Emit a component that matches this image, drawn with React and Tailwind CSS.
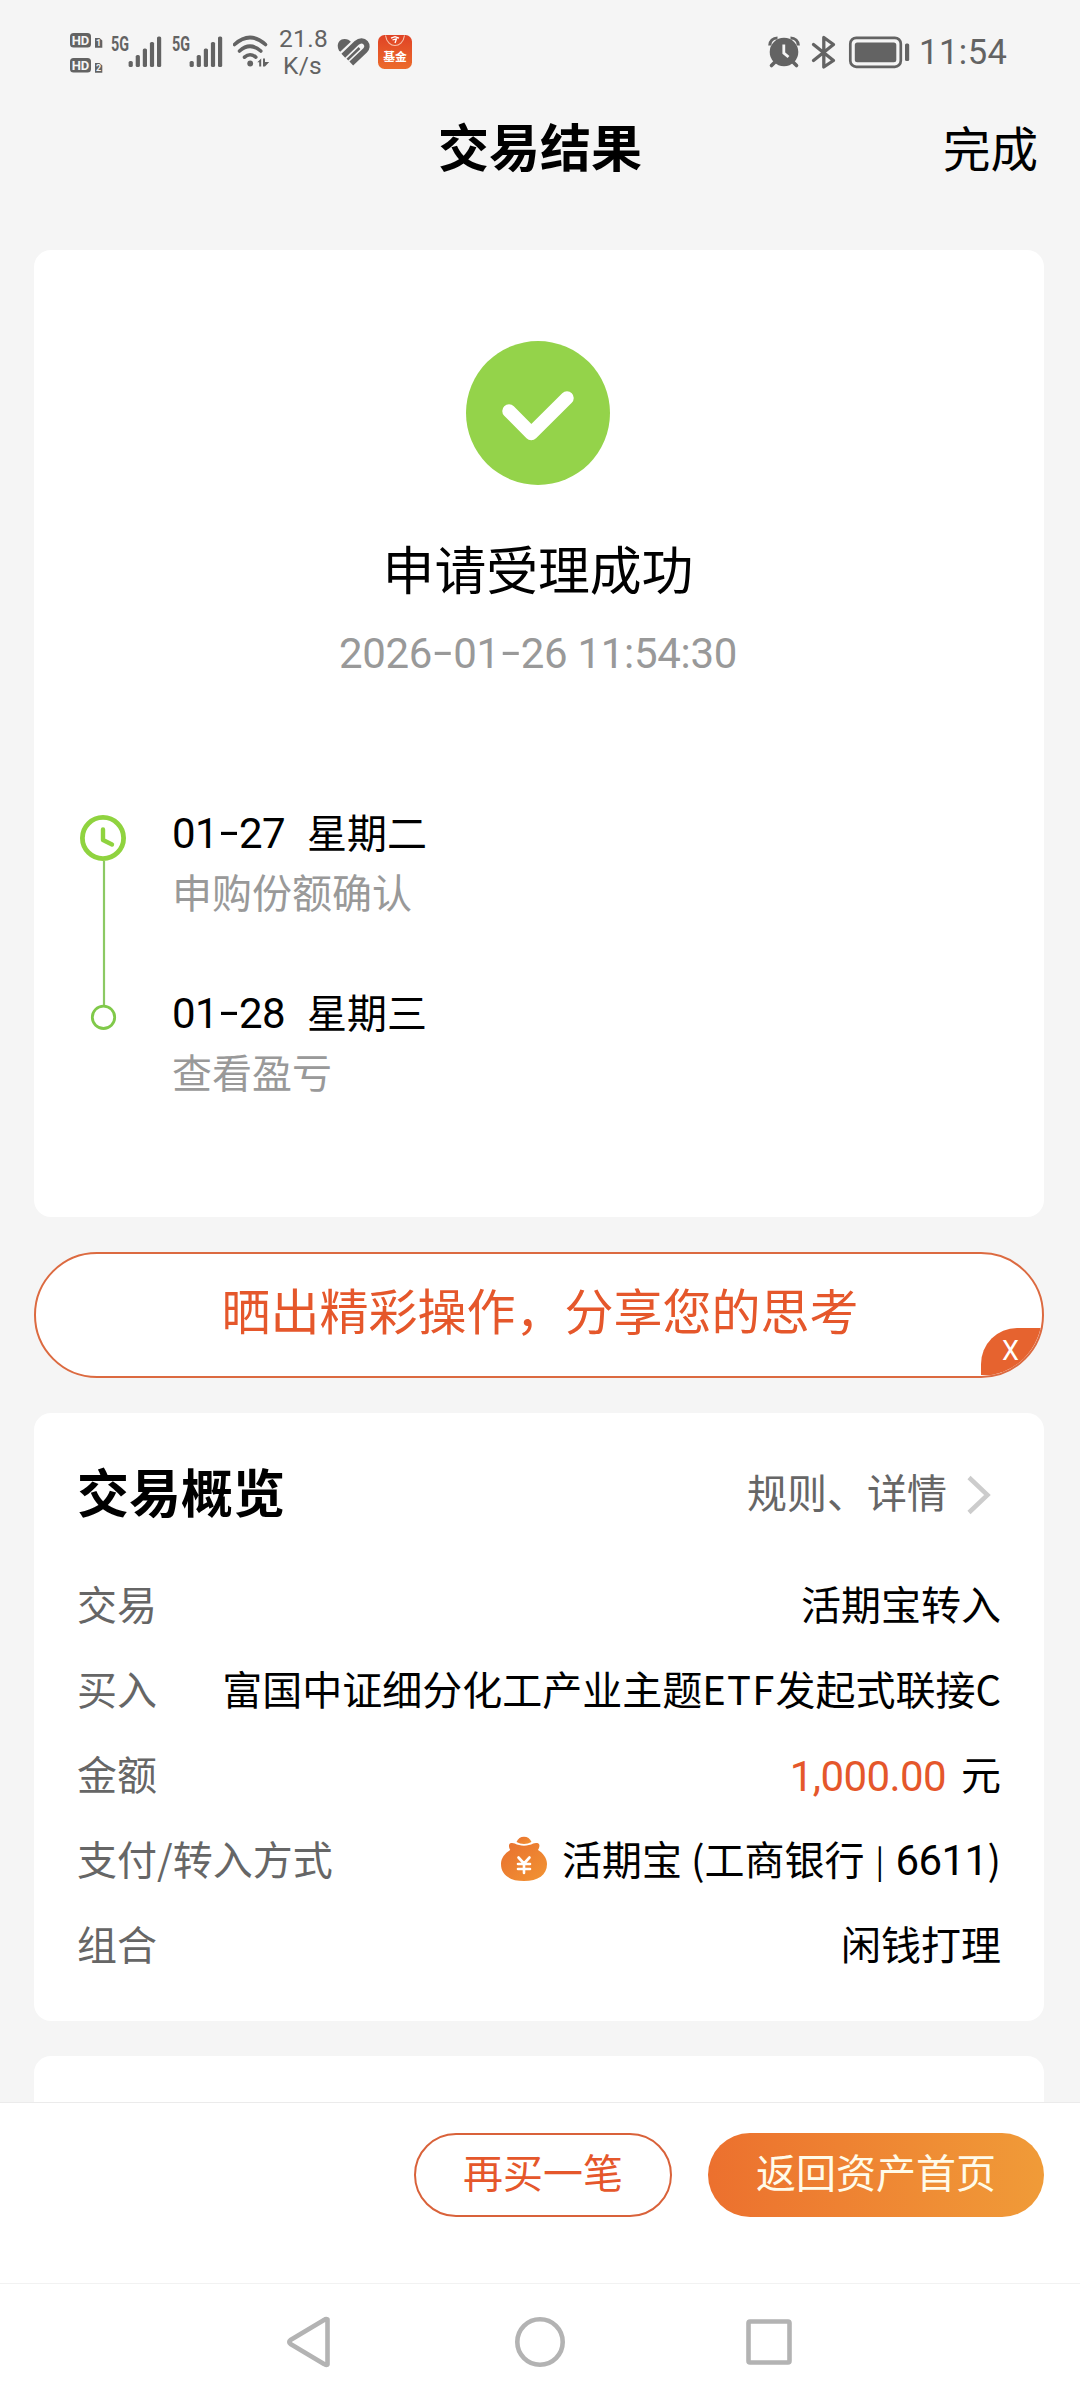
import React from "react";

/* Status bar icons share one vertical coordinate system (0-100). */
function HdBadges() {
  return (
    <svg className="block h-[100px] w-[41px] shrink-0" viewBox="70 0 41 100">
      {[33, 58].map((y, i) => (
        <g key={y}>
          <rect x="70" y={y} width="21" height="14.5" rx="3.5" fill="#636363" />
          <text x="80.5" y={y + 12} textAnchor="middle" fontFamily="Roboto, sans-serif" fontWeight="700" fontSize="13" fill="#f5f5f5">HD</text>
          <path d={`M95 ${y + 5}h4.5l2.8 2.5v7.2h-7.3z`} fill="#636363" />
          <text x="98.6" y={y + 13.2} textAnchor="middle" fontFamily="Roboto, sans-serif" fontWeight="700" fontSize="9" fill="#f5f5f5">{i + 1}</text>
        </g>
      ))}
    </svg>
  );
}

function Signal() {
  return (
    <svg className="block h-[100px] w-[61px] shrink-0" viewBox="111 0 61 100">
      <text x="111" y="50.5" textLength="18" lengthAdjust="spacingAndGlyphs" fontFamily="Roboto, sans-serif" fontWeight="700" fontSize="19.5" fill="#636363">5G</text>
      {[61, 55, 48.5, 42, 36.5].map((y, i) => (
        <rect key={y} x={128.6 + i * 7.1} y={y} width="4.2" height={67 - y} rx="1.6" fill="#636363" />
      ))}
    </svg>
  );
}

function Wifi() {
  return (
    <svg className="block h-[100px] w-[47px] shrink-0" viewBox="233 0 47 100" fill="none" stroke="#636363" strokeWidth="3.6" strokeLinecap="round">
      <path d="M234.5 44.5Q250 30.500 265.500 44.500" />
      <path d="M239.500 51Q250 41.500 260.800 51" />
      <path d="M244.500 57.200Q250 52.300 255.800 57.200" />
      <circle cx="250.200" cy="63.500" r="2.900" fill="#636363" stroke="none" />
      <path d="M257.300 62.300l3.900-3.700v7.800h-2v-4.100zM263 58.600h2v3.500h4.200l-4.200 4.500h-2z" fill="#636363" stroke="none" />
    </svg>
  );
}

function Health() {
  return (
    <svg className="block h-[100px] w-[41px] shrink-0" viewBox="337 0 41 100" fill="none" stroke="#636363" strokeLinecap="butt">
      <path d="M339 50.500C336 45.500 338.500 39 344.500 39C347.500 39 349.500 40.200 350.800 41.700L340.200 51.800Z" fill="#636363" stroke="none" />
      <path d="M343.300 55.800L356.500 43C360 39.900 363.700 40.600 365.600 42.700C367.700 45.200 367.300 48.200 365 50.500L351.300 63.500" strokeWidth="5.400" />
      <path d="M347.400 59.600L359.500 48" strokeWidth="2.600" />
    </svg>
  );
}

function FundApp() {
  return (
    <svg className="block h-[100px] w-[36px] shrink-0" viewBox="378 0 36 100">
      <defs>
        <linearGradient id="fund" x1="0" y1="0" x2="0" y2="1">
          <stop offset="0" stopColor="#e04325" />
          <stop offset="1" stopColor="#ec6b2b" />
        </linearGradient>
      </defs>
      <rect x="378" y="35" width="34" height="34" rx="6.500" fill="url(#fund)" />
      <path d="M385.500 35.500C386.500 42.500 391 45.500 395 45.500S403.500 42.500 404.500 35.500" fill="none" stroke="#f6c4ad" strokeWidth="1.100" />
      <path d="M391 38.200L395 36.600L399 38.200M392.500 40L396.500 38.800L395 43" fill="none" stroke="#fff" strokeWidth="1.300" />
      <text x="395" y="61.200" textAnchor="middle" fontFamily="'Noto Sans CJK SC', sans-serif" fontWeight="700" fontSize="11.800" fill="#fff">基金</text>
    </svg>
  );
}

function RightStatus() {
  return (
    <svg className="block h-[100px] w-[155px] shrink-0" viewBox="767 0 155 100" fill="none" stroke="#636363">
      <circle cx="784" cy="52" r="14.300" fill="#636363" stroke="none" />
      <path d="M769.800 45.500C769.800 41 773 38 777.500 38M790.500 38C795 38 798.300 41 798.300 45.500" strokeWidth="3.200" />
      <path d="M775.500 61.500L771.500 65.500M792.500 61.500L796.500 65.500" strokeWidth="3.600" strokeLinecap="round" />
      <path d="M783.800 44.500V53L788.500 57" stroke="#f5f5f5" strokeWidth="2.800" />
      <path d="M813.500 44.500L833.500 60.500L823.800 67V37.500L833.500 44.500L813.500 60.500" strokeWidth="3.300" strokeLinejoin="round" strokeLinecap="round" />
      <rect x="850.300" y="37.800" width="50.500" height="29" rx="6" strokeWidth="2.700" />
      <rect x="854.800" y="42.500" width="41.500" height="19.800" rx="2.500" fill="#636363" stroke="none" />
      <rect x="905" y="43.500" width="4.200" height="17.500" rx="1.500" fill="#636363" stroke="none" />
    </svg>
  );
}

function MoneyBag() {
  return (
    <svg className="mr-[15px] mt-[3px] block h-[46px] w-[46px] shrink-0" viewBox="0 0 46 46">
      <defs>
        <linearGradient id="bag" x1="0" y1="0" x2="1" y2="1">
          <stop offset="0" stopColor="#e8702f" />
          <stop offset="1" stopColor="#f29433" />
        </linearGradient>
      </defs>
      <path d="M15.500 6C17 2.500 19.500 .700 23 .700S29 2.500 30.500 6C26 8.500 20 8.500 15.500 6Z" fill="url(#bag)" />
      <path d="M8.200 8.500C9 6.600 12 6.700 13.800 7.600C19 10.300 27 10.300 32.200 7.600C34 6.700 37.500 6.600 38.200 8.500C39 10.500 37.500 13 37 14C42 17 46 22 46 28C46 39 37 45 23 45S0 39 0 28C0 22 4 17 9.300 14C8.500 12.500 7.500 10.500 8.200 8.500Z" fill="url(#bag)" />
      <path d="M17.500 21.500L23 27.500L28.500 21.500M17 28H29M17 33H29M23 27.500V37" fill="none" stroke="#fff" strokeWidth="2.600" strokeLinecap="round" />
    </svg>
  );
}

/* Numerals with a wide dash between the groups. */
function Digits({ text }) {
  return (
    <span className="whitespace-pre font-['Roboto',sans-serif] text-[42px] leading-[50px] tracking-[-0.6px]">
      {text.split("-").map((part, i) => (
        <React.Fragment key={i}>
          {i > 0 && <span className="inline-block w-[21px] -translate-y-[2px] scale-x-[1.6] text-center">-</span>}
          {part}
        </React.Fragment>
      ))}
    </span>
  );
}

function Step({ date, day, note }) {
  return (
    <div className="text-[40px] leading-[60px]">
      <div className="flex h-[60px]">
        <span className="w-[135px]"><Digits text={date} /></span>
        <span>{day}</span>
      </div>
      <div className="h-[60px] text-[#999]">{note}</div>
    </div>
  );
}

function Row({ label, children }) {
  return (
    <div className="flex h-[85px] items-center justify-between whitespace-pre text-[40px] leading-[60px]">
      <span className="text-[#666]">{label}</span>
      <span className="flex items-center">{children}</span>
    </div>
  );
}

export default function App() {
  return (
    <div className="flex h-[2400px] w-[1080px] flex-col overflow-hidden bg-[#f5f5f5] font-['Noto_Sans_CJK_SC',sans-serif] text-black">
      <div className="flex h-[100px] shrink-0 justify-between pl-[70px] pr-[72px] font-['Roboto',sans-serif] text-[#636363]">
        <div className="flex">
          <HdBadges />
          <Signal />
          <Signal />
          <Wifi />
          <div className="-ml-[1px] mr-[11px] w-[47px] pt-[25px] text-center text-[24.500px] leading-[27px] tracking-[0.3px]">
            <div>21.8</div>
            <div>K/s</div>
          </div>
          <Health />
          <FundApp />
        </div>
        <div className="flex">
          <RightStatus />
          <span className="-ml-[3px] w-[89px] whitespace-nowrap text-[34.500px] leading-[104px] tracking-[0.5px]">11:54</span>
        </div>
      </div>

      <header className="grid h-[90px] shrink-0 grid-cols-3 items-center px-[42px]">
        <span />
        <h1 className="text-center text-[51px] font-bold leading-[60px]">交易结果</h1>
        <span className="mt-[4px] text-right text-[47.500px] leading-[60px]">完成</span>
      </header>

      <main className="mt-[60px] flex h-[1852px] shrink-0 flex-col gap-[35px] overflow-hidden px-[34px] pr-[36px]">
        <section className="flex h-[967px] shrink-0 flex-col rounded-[17px] bg-white pt-[91px]">
          <svg className="ml-[432px] block h-[144px] w-[144px]" viewBox="0 0 144 144">
            <circle cx="72" cy="72" r="72" fill="#94d34a" />
            <path d="M43 70L65.300 92.500L101 57" fill="none" stroke="#fff" strokeWidth="13.500" strokeLinecap="round" strokeLinejoin="round" />
          </svg>
          <div className="mt-[43px] pr-[2px] text-center text-[51.800px] leading-[80px]">申请受理成功</div>
          <div className="mt-[21px] h-[60px] pr-[2px] text-center leading-[60px] text-[#999] [&>span]:tracking-[-0.3px]">
            <Digits text="2026-01-26 11:54:30" />
          </div>
          <div className="mt-[112px] flex pl-[46px]">
            <svg className="mt-[14px] block h-[216px] w-[46px]" viewBox="0 0 46 216" fill="none">
              <path d="M24 46V190" stroke="#8cc963" strokeWidth="2.200" />
              <circle cx="23" cy="23" r="20.600" stroke="#8fd33f" strokeWidth="4.800" />
              <path d="M23 14.500V25L32 29.500" stroke="#8fd33f" strokeWidth="4.400" strokeLinecap="round" strokeLinejoin="round" />
              <circle cx="23.500" cy="202.300" r="11.200" stroke="#80c94a" strokeWidth="2.800" />
            </svg>
            <div className="ml-[46px] flex flex-col gap-[60px]">
              <Step date="01-27" day="星期二" note="申购份额确认" />
              <Step date="01-28" day="星期三" note="查看盈亏" />
            </div>
          </div>
        </section>

        <div className="relative h-[126px] shrink-0 overflow-hidden rounded-full border-2 border-[#dc6a40] bg-white pl-[2px] text-center text-[49px] leading-[110px] text-[#e5572b]">
          晒出精彩操作，分享您的思考
          <span className="absolute bottom-[1px] right-0 h-[47px] w-[61px] rounded-tl-[36px] bg-[#e6632f] pr-[2px] text-center font-['Roboto',sans-serif] text-[27px] leading-[47px] text-white">X</span>
        </div>

        <section className="h-[608px] shrink-0 rounded-[17px] bg-white pl-[43px] pr-[43px] pt-[38px]">
          <div className="mb-[29px] flex h-[80px] items-center justify-between">
            <h2 className="text-[52px] font-bold leading-[80px]">交易概览</h2>
            <div className="flex items-center text-[40px] leading-[80px] text-[#666]">
              规则、详情
              <svg className="ml-[20px] mr-[10px] mt-[7px] block h-[40px] w-[24px]" viewBox="0 0 24 40" fill="none" stroke="#ccc" strokeWidth="4.500">
                <path d="M2 2.500L20.500 20L2 37.500" />
              </svg>
            </div>
          </div>
          <Row label="交易">活期宝转入</Row>
          <Row label="买入">富国中证细分化工产业主题<span className="tracking-[1.2px]">ETF</span>发起式联接C</Row>
          <Row label="金额">
            <span className="mr-[15px] mt-[3px]"><span className="text-[#e5572b]"><Digits text="1,000.00" /></span></span>元
          </Row>
          <Row label="支付/转入方式">
            <MoneyBag />
            <span className="mt-[3px]">活期宝 (工商银行<span className="relative -top-[2px] mx-[4px] text-[32px]"> | </span><Digits text="6611" />)</span>
          </Row>
          <Row label="组合">闲钱打理</Row>
        </section>

        <section className="h-[120px] shrink-0 rounded-[17px] bg-white" />
      </main>

      <footer className="flex h-[181px] shrink-0 items-start justify-end gap-[36px] border-t border-[#ebebeb] bg-white pr-[36px] pt-[30px] text-[40px]">
        <button className="h-[84px] w-[258px] rounded-full border-2 border-[#d9623a] pb-[8px] leading-[70px] text-[#e5572b]">再买一笔</button>
        <button className="h-[84px] w-[336px] rounded-full bg-gradient-to-r from-[#ec702e] to-[#f09b38] pb-[8px] leading-[76px] text-[#fffbe9]">返回资产首页</button>
      </footer>

      <nav className="h-[117px] shrink-0 border-t border-[#f2f2f2] bg-white">
        <svg className="block h-[116px] w-[1080px]" viewBox="0 2284 1080 116" fill="none" stroke="#b3b3b3" strokeWidth="4.600" strokeLinejoin="round">
          <path d="M327.500 2319.500V2364.500Q326 2365.500 324 2364L290.500 2344Q288 2342 290.500 2340L324 2320Q326 2318.500 327.500 2319.500Z" />
          <circle cx="540" cy="2342" r="22.700" />
          <rect x="748.500" y="2321.500" width="41" height="41" rx="1.500" />
        </svg>
      </nav>
    </div>
  );
}
